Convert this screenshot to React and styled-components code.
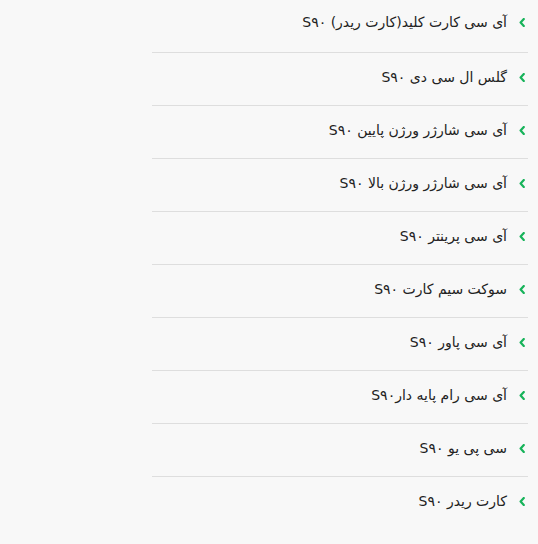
import React from 'react';
import styled, { createGlobalStyle } from 'styled-components';

const ITEMS = [
  'آی سی کارت کلید(کارت ریدر) S۹۰',
  'گلس ال سی دی S۹۰',
  'آی سی شارژر ورژن پایین S۹۰',
  'آی سی شارژر ورژن بالا S۹۰',
  'آی سی پرینتر S۹۰',
  'سوکت سیم کارت S۹۰',
  'آی سی پاور S۹۰',
  'آی سی رام پایه دارS۹۰',
  'سی پی یو S۹۰',
  'کارت ریدر S۹۰',
];

const GlobalStyle = createGlobalStyle`
  body {
    margin: 0;
    background: #f8f8f8;
    font-family: "DejaVu Sans", "Noto Sans", sans-serif;
  }
`;

const Page = styled.div`
  width: 538px;
  height: 544px;
  overflow: hidden;
  background: #f8f8f8;
`;

const List = styled.ul`
  direction: rtl;
  list-style: none;
  margin: 0 10px 0 auto;
  padding: 0;
  width: 376px;
`;

const Row = styled.li`
  display: flex;
  align-items: center;
  gap: 12px;
  height: 48px;
  padding: 0 3px 4px 0;
  border-bottom: 1px solid #dedede;
  color: #222;
  font-size: 14px;

  /* first row is cut off at the top */
  &:first-child {
    height: 44px;
    padding-bottom: 8px;
  }

  &:last-child {
    border-bottom: none;
  }
`;

const Chevron = styled.svg`
  width: 6px;
  height: 9px;
  flex-shrink: 0;
  margin-top: 1px;
`;

const Label = styled.span`
  white-space: nowrap;
`;

function App() {
  return (
    <Page>
      <GlobalStyle />
      <List>
        {ITEMS.map(item => (
          <Row key={item}>
            <Chevron viewBox="0 0 6 9">
              <path
                d="M4.8 1 L1.6 4.5 L4.8 8"
                fill="none"
                stroke="#17b35a"
                strokeWidth="2.2"
                strokeLinecap="round"
                strokeLinejoin="round"
              />
            </Chevron>
            <Label>{item}</Label>
          </Row>
        ))}
      </List>
    </Page>
  );
}

export default App;
